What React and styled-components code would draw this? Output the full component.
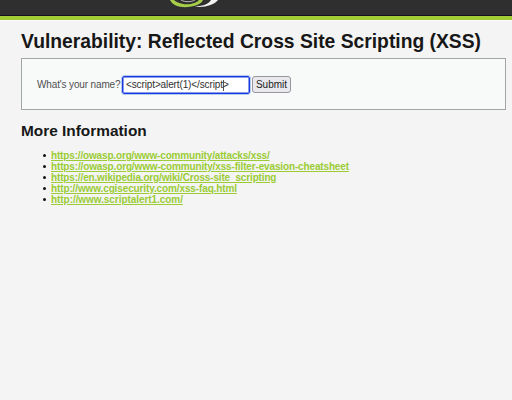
import React from 'react';
import styled, { createGlobalStyle } from 'styled-components';

const GlobalStyle = createGlobalStyle`
  * { box-sizing: border-box; }
  html, body { margin: 0; background: #f4f4f4; }
  body { font-family: "Liberation Sans", Arial, sans-serif; overflow: hidden; }
`;

const Page = styled.div`
  width: 512px;
  height: 400px;
  overflow: hidden;
  background: #f4f4f4;
`;

const Header = styled.header`
  height: 20px;
  padding-left: 168px;
  background: #2f2f2f;
  border-bottom: 4px solid #a1cc33;
  box-shadow: inset 0 -1px #171020, 0 1px #fafafa;
`;

const Logo = styled.svg`
  display: block;
  width: 54px;
  height: 9px;
`;

const Main = styled.main`
  padding: 0 7px 0 21px;
`;

const Title = styled.h1`
  margin: 11px 0 5px;
  height: 22px;
  font-size: 19.3px;
  line-height: 22px;
  color: #171717;
  white-space: nowrap;
`;

const Panel = styled.form`
  display: flex;
  align-items: flex-start;
  width: 485px;
  height: 52px;
  padding: 16px 15px 0;
  background: #f8fafa;
  border: 1px solid #a2a6a6;
`;

const Label = styled.label`
  width: 85px;
  font-size: 10px;
  line-height: 19px;
  letter-spacing: -0.14px;
  color: #505050;
  white-space: nowrap;
`;

const Field = styled.div`
  display: flex;
  align-items: center;
  width: 128px;
  height: 18px;
  margin-top: 1px;
  padding-left: 3px;
  border: 1px solid #1739dd;
  border-radius: 2px;
  outline: 1px solid #b5caef;
  box-shadow: inset 0 0 0 0.5px #1739dd;
  background: #fff;
  font-size: 10px;
  line-height: 16px;
  letter-spacing: -0.12px;
  color: #303030;
  white-space: nowrap;
`;

const Caret = styled.span`
  width: 1px;
  height: 11px;
  margin-right: -1px;
  background: #555;
`;

const Submit = styled.button`
  width: 39px;
  height: 17px;
  margin: 1px 0 0 2px;
  padding: 0;
  border: 1px solid #97979d;
  border-radius: 3px;
  background: #e9e9ed;
  font: 10px/16px "Liberation Sans", Arial, sans-serif;
  color: #222;
`;

const Subtitle = styled.h2`
  margin: 12px 0 10px;
  height: 18px;
  font-size: 15.4px;
  line-height: 18px;
  color: #171717;
`;

const Links = styled.ul`
  margin: 0;
  padding: 0 0 0 22px;
  list-style: none;
`;

const Item = styled.li`
  display: flex;
  align-items: center;
  height: 11px;
  font-size: 10px;
  line-height: 11px;

  &::before {
    content: "";
    width: 3px;
    height: 3px;
    margin-right: 5px;
    border-radius: 50%;
    background: #111;
  }
`;

const Link = styled.a`
  color: #9bcc35;
  font-weight: bold;
  white-space: nowrap;
  letter-spacing: ${(p) => p.$tracking}px;
`;

const resources = [
  { url: 'https://owasp.org/www-community/attacks/xss/', tracking: -0.16 },
  { url: 'https://owasp.org/www-community/xss-filter-evasion-cheatsheet', tracking: -0.145 },
  { url: 'https://en.wikipedia.org/wiki/Cross-site_scripting', tracking: -0.15 },
  { url: 'http://www.cgisecurity.com/xss-faq.html', tracking: -0.12 },
  { url: 'http://www.scriptalert1.com/', tracking: -0.06 },
];

export default function App() {
  return (
    <Page>
      <GlobalStyle />
      <Header>
        <Logo viewBox="0 0 54 9">
          <path d="M2 0C5 6 13 8 22 6.8C29 5.8 34 3 35 0H31C28 3.5 21 5.2 14 3.7C10 2.8 7 1.4 6 0Z" fill="#a7ce49" />
          <path d="M50 0C46 5 37 7.8 27 6.7C36 6 41 3.5 43 0Z" fill="#f3f4f2" />
          <path d="M13 0C17 2.3 23 2.2 27 0" fill="none" stroke="#b8bab5" />
        </Logo>
      </Header>
      <Main>
        <Title>Vulnerability: Reflected Cross Site Scripting (XSS)</Title>
        <Panel onSubmit={(e) => e.preventDefault()}>
          <Label>What's your name?</Label>
          <Field>
            &lt;script&gt;alert(1)&lt;/script<Caret />&gt;
          </Field>
          <Submit>Submit</Submit>
        </Panel>
        <Subtitle>More Information</Subtitle>
        <Links>
          {resources.map(({ url, tracking }) => (
            <Item key={url}>
              <Link href={url} $tracking={tracking}>{url}</Link>
            </Item>
          ))}
        </Links>
      </Main>
    </Page>
  );
}
